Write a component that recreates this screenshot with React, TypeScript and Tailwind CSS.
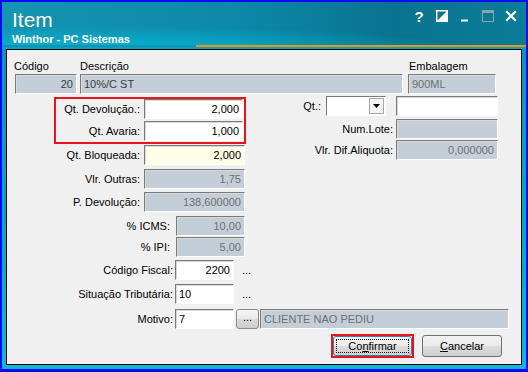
import React from "react";

type FieldProps = {
  className: string;
  children?: React.ReactNode;
  left?: boolean;
};

function Field({ className, children, left }: FieldProps) {
  return (
    <div
      className={`flex h-[20px] shrink-0 items-center border border-t-[#7a7a7a] border-l-[#7a7a7a] border-b-white border-r-white shadow-[inset_1px_1px_0_#d9d9d9] px-[3px] whitespace-nowrap ${
        left ? "justify-start" : "justify-end"
      } ${className}`}
    >
      {children}
    </div>
  );
}

function Label({ className, children }: { className: string; children: React.ReactNode }) {
  return <div className={`shrink-0 whitespace-nowrap text-right ${className}`}>{children}</div>;
}

function TitleIcons() {
  return (
    <div className="flex items-start gap-[11px] pr-[9px] pt-[8px]">
      <span className="w-[12px] text-center text-[15px] font-bold leading-[14px] text-white">?</span>
      <svg width="12" height="12" viewBox="0 0 12 12">
        <rect x="0.75" y="0.75" width="10.5" height="10.5" fill="none" stroke="white" strokeWidth="1.5" />
        <polygon points="11,1 11,11 1,11" fill="white" />
      </svg>
      <svg width="12" height="12" viewBox="0 0 12 12">
        <rect x="2" y="9.5" width="7" height="2" fill="white" />
      </svg>
      <svg width="12" height="12" viewBox="0 0 12 12">
        <rect x="0.5" y="0.5" width="11" height="11" fill="none" stroke="#8fa3aa" strokeWidth="1" />
        <rect x="0.5" y="0.5" width="11" height="2.5" fill="#8fa3aa" />
      </svg>
      <svg width="12" height="12" viewBox="0 0 12 12">
        <path d="M1.2 1.2 L10.8 10.8 M10.8 1.2 L1.2 10.8" stroke="white" strokeWidth="2.2" />
      </svg>
    </div>
  );
}

export default function App() {
  return (
    <div className="h-[372px] w-[528px] bg-[#0a0af5] p-[2px] pb-[3px] font-['Liberation_Sans',Arial,sans-serif] text-[11px] leading-[13px] text-black">
      <div className="flex h-full flex-col bg-[linear-gradient(180deg,#0f8fb0_0%,#08a6c6_60%,#10b6d4_100%)]">
        {/* Title bar */}
        <div className="flex h-[43px] shrink-0 justify-between bg-[radial-gradient(ellipse_70%_60%_at_20%_115%,#00b8d8_0%,rgba(0,184,216,0)_100%),linear-gradient(90deg,#1594b4_0%,#0d88a8_45%,#08738f_75%,#0a7d99_100%)]">
          <div className="flex flex-col pl-[10px] pt-[7px]">
            <div className="text-[21px] leading-[22px] text-white">Item</div>
            <div className="mt-[2px] text-[11px] font-bold leading-[13px] text-white">Winthor - PC Sistemas</div>
          </div>
          <TitleIcons />
        </div>
        <div className="ml-[194px] h-[2px] shrink-0 bg-[#f0940f]" />
        <div className="h-[2px] shrink-0 bg-[#0b9fbf]" />

        {/* Panel */}
        <div className="mx-[4px] flex h-[316px] shrink-0 flex-col border border-black bg-[#f0f0f0]">
          {/* headers */}
          <div className="ml-[8px] mt-[10px] flex h-[13px]">
            <div className="-ml-[1px] w-[63px]">Código</div>
            <div className="ml-[3px] w-[323px]">Descrição</div>
            <div className="ml-[6px] w-[87px]">Embalagem</div>
          </div>
          <div className="ml-[8px] mt-[1px] flex">
            <Field className="w-[62px] bg-[#c4ced9] text-[#3a3a3a]">20</Field>
            <Field left className="ml-[3px] w-[323px] bg-[#c4ced9] text-[#3a3a3a]">10%/C ST</Field>
            <Field left className="ml-[5px] w-[88px] bg-[#c4ced9] text-[#707070]">900ML</Field>
          </div>

          {/* main section */}
          <div className="flex items-start">
            <div className="ml-[47px] flex w-[192px] flex-col">
              <div className="mt-[3px] flex w-[192px] flex-col gap-[2px] border-2 border-[#e8151d] pb-[1px] pr-[1px]">
                <div className="flex items-center">
                  <Label className="w-[84px]">Qt. Devolução.:</Label>
                  <Field className="ml-[4px] w-[99px] bg-white">2,000</Field>
                </div>
                <div className="flex items-center">
                  <Label className="w-[84px]">Qt. Avaria:</Label>
                  <Field className="ml-[4px] w-[99px] bg-white">1,000</Field>
                </div>
              </div>
              <div className="mt-[1px] flex items-center">
                <Label className="w-[86px]">Qt. Bloqueada:</Label>
                <Field className="ml-[4px] w-[101px] bg-[#fffde6]">2,000</Field>
              </div>
            </div>

            <div className="ml-[4px] mt-[2px] flex flex-col">
              <div className="flex items-center">
                <Label className="w-[71px]">Qt.:</Label>
                <div className="ml-[5px] flex h-[20px] w-[60px] items-stretch border border-t-[#7a7a7a] border-l-[#7a7a7a] border-b-white border-r-white bg-white p-[1px]">
                  <div className="flex-1" />
                  <div className="flex w-[15px] items-center justify-center border border-[#a8a8a8] bg-[#f4f4f4]">
                    <svg width="7" height="4" viewBox="0 0 7 4">
                      <polygon points="0,0 7,0 3.5,4" fill="black" />
                    </svg>
                  </div>
                </div>
                <Field className="ml-[10px] w-[102px] bg-white" />
              </div>
              <div className="mt-[3px] flex items-center">
                <Label className="w-[143px]">Num.Lote:</Label>
                <Field className="ml-[3px] w-[102px] bg-[#c4ced9]" />
              </div>
              <div className="mt-[1px] flex items-center">
                <Label className="w-[143px]">Vlr. Dif.Aliquota:</Label>
                <Field className="ml-[3px] w-[102px] bg-[#c4ced9] text-[#707070]">0,000000</Field>
              </div>
            </div>
          </div>

          {/* group A */}
          <div className="mt-[4px] flex items-center">
            <Label className="w-[133px]">Vlr. Outras:</Label>
            <Field className="ml-[4px] w-[101px] bg-[#c4ced9] text-[#707070]">1,75</Field>
          </div>
          <div className="mt-[3px] flex items-center">
            <Label className="w-[133px]">P. Devolução:</Label>
            <Field className="ml-[4px] w-[101px] bg-[#c4ced9] text-[#707070]">138,600000</Field>
          </div>

          {/* group B */}
          <div className="mt-[4px] flex items-center">
            <Label className="w-[163px]">% ICMS:</Label>
            <Field className="ml-[6px] w-[69px] bg-[#c4ced9] text-[#707070]">10,00</Field>
          </div>
          <div className="mt-[1px] flex items-center">
            <Label className="w-[163px]">% IPI:</Label>
            <Field className="ml-[6px] w-[69px] bg-[#c4ced9] text-[#707070]">5,00</Field>
          </div>

          {/* group C */}
          <div className="mt-[3px] flex items-center">
            <Label className="w-[166px]">Código Fiscal:</Label>
            <Field className="ml-[2px] w-[59px] bg-white">2200</Field>
            <span className="ml-[8px]">...</span>
          </div>
          <div className="mt-[4px] flex items-center">
            <Label className="w-[166px]">Situação Tributária:</Label>
            <Field left className="ml-[2px] w-[59px] bg-white">10</Field>
            <span className="ml-[8px]">...</span>
          </div>
          <div className="mt-[5px] flex items-center">
            <Label className="w-[166px]">Motivo:</Label>
            <Field left className="ml-[2px] w-[59px] bg-white">7</Field>
            <div className="ml-[2px] flex h-[20px] w-[23px] items-center justify-center rounded-[3px] border border-[#8a8a8a] bg-[linear-gradient(180deg,#f6f6f6_0%,#e9e9e9_50%,#d9d9d9_51%,#cdcdcd_100%)] pb-[3px]">
              ...
            </div>
            <Field left className="ml-[1px] w-[249px] bg-[#c4ced9] text-[#707070]">CLIENTE NAO PEDIU</Field>
          </div>

          {/* buttons */}
          <div className="mt-[5px] flex items-center justify-end pr-[19px]">
            <div className="flex h-[24px] w-[83px] items-center justify-center border-2 border-[#e8151d]">
              <div className="flex h-[20px] w-[79px] items-center justify-center rounded-[3px] border border-[#3c7fb1] bg-[linear-gradient(180deg,#f2f2f2_0%,#ebebeb_50%,#dddddd_51%,#cfcfcf_100%)] p-[2px]">
                <div className="flex h-full w-full items-center justify-center border border-dotted border-black">
                  <span>
                    Co<span className="underline">n</span>firmar
                  </span>
                </div>
              </div>
            </div>
            <div className="ml-[8px] flex h-[22px] w-[80px] items-center justify-center rounded-[3px] border border-[#707070] bg-[linear-gradient(180deg,#f2f2f2_0%,#ebebeb_50%,#dddddd_51%,#cfcfcf_100%)]">
              <span>
                <span className="underline">C</span>ancelar
              </span>
            </div>
          </div>
        </div>
      </div>
    </div>
  );
}
